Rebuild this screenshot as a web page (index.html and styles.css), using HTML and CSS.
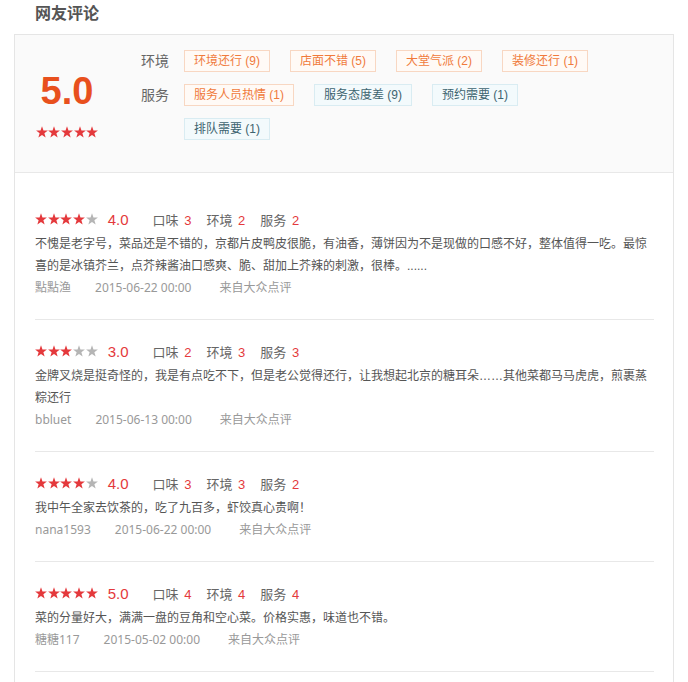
FILE: index.html
```html
<!DOCTYPE html>
<html lang="zh-CN">
<head>
  <meta charset="UTF-8" />
  <meta name="viewport" content="width=device-width, initial-scale=1.0"/>
  <title>网友评论</title>
  <link rel="stylesheet" href="styles.css">
</head>
<body>
  <svg width="0" height="0" style="position:absolute">
    <symbol id="star" viewBox="0 0 12 12">
      <polygon points="6,0.2 7.47,4.38 11.9,4.48 8.38,7.17 9.64,11.42 6,8.9 2.36,11.42 3.62,7.17 0.1,4.48 4.53,4.38"/>
    </symbol>
  </svg>

  <div class="page">
    <h2 class="section-title">网友评论</h2>

    <div class="comment-box">
      <div class="summary">
        <div class="score">
          <div class="score-num">5.0</div>
          <div class="stars">
            <svg class="star"><use href="#star"/></svg>
            <svg class="star"><use href="#star"/></svg>
            <svg class="star"><use href="#star"/></svg>
            <svg class="star"><use href="#star"/></svg>
            <svg class="star"><use href="#star"/></svg>
          </div>
        </div>
        <div class="tag-groups">
          <div class="tag-group">
            <span class="tag-label">环境</span>
            <div class="tags">
              <span class="tag good">环境还行 (9)</span>
              <span class="tag good">店面不错 (5)</span>
              <span class="tag good">大堂气派 (2)</span>
              <span class="tag good">装修还行 (1)</span>
            </div>
          </div>
          <div class="tag-group">
            <span class="tag-label">服务</span>
            <div class="tags">
              <span class="tag good">服务人员热情 (1)</span>
              <span class="tag bad">服务态度差 (9)</span>
              <span class="tag bad">预约需要 (1)</span>
              <span class="tag bad">排队需要 (1)</span>
            </div>
          </div>
        </div>
      </div>

      <ul class="review-list">
        <li class="review">
          <div class="review-head">
            <div class="stars">
              <svg class="star"><use href="#star"/></svg>
              <svg class="star"><use href="#star"/></svg>
              <svg class="star"><use href="#star"/></svg>
              <svg class="star"><use href="#star"/></svg>
              <svg class="star off"><use href="#star"/></svg>
            </div>
            <span class="review-score">4.0</span>
            <span class="sub-score">口味 <em>3</em></span>
            <span class="sub-score">环境 <em>2</em></span>
            <span class="sub-score">服务 <em>2</em></span>
          </div>
          <p class="review-text">不愧是老字号，菜品还是不错的，京都片皮鸭皮很脆，有油香，薄饼因为不是现做的口感不好，整体值得一吃。最惊喜的是冰镇芥兰，点芥辣酱油口感爽、脆、甜加上芥辣的刺激，很棒。......</p>
          <div class="review-meta">
            <span class="user">點點渔</span>
            <span class="date">2015-06-22 00:00</span>
            <span class="source">来自大众点评</span>
          </div>
        </li>

        <li class="review">
          <div class="review-head">
            <div class="stars">
              <svg class="star"><use href="#star"/></svg>
              <svg class="star"><use href="#star"/></svg>
              <svg class="star"><use href="#star"/></svg>
              <svg class="star off"><use href="#star"/></svg>
              <svg class="star off"><use href="#star"/></svg>
            </div>
            <span class="review-score">3.0</span>
            <span class="sub-score">口味 <em>2</em></span>
            <span class="sub-score">环境 <em>3</em></span>
            <span class="sub-score">服务 <em>3</em></span>
          </div>
          <p class="review-text">金牌叉烧是挺奇怪的，我是有点吃不下，但是老公觉得还行，让我想起北京的糖耳朵……其他菜都马马虎虎，煎裹蒸粽还行</p>
          <div class="review-meta">
            <span class="user">bbluet</span>
            <span class="date">2015-06-13 00:00</span>
            <span class="source">来自大众点评</span>
          </div>
        </li>

        <li class="review">
          <div class="review-head">
            <div class="stars">
              <svg class="star"><use href="#star"/></svg>
              <svg class="star"><use href="#star"/></svg>
              <svg class="star"><use href="#star"/></svg>
              <svg class="star"><use href="#star"/></svg>
              <svg class="star off"><use href="#star"/></svg>
            </div>
            <span class="review-score">4.0</span>
            <span class="sub-score">口味 <em>3</em></span>
            <span class="sub-score">环境 <em>3</em></span>
            <span class="sub-score">服务 <em>2</em></span>
          </div>
          <p class="review-text">我中午全家去饮茶的，吃了九百多，虾饺真心贵啊！</p>
          <div class="review-meta">
            <span class="user">nana1593</span>
            <span class="date">2015-06-22 00:00</span>
            <span class="source">来自大众点评</span>
          </div>
        </li>

        <li class="review">
          <div class="review-head">
            <div class="stars">
              <svg class="star"><use href="#star"/></svg>
              <svg class="star"><use href="#star"/></svg>
              <svg class="star"><use href="#star"/></svg>
              <svg class="star"><use href="#star"/></svg>
              <svg class="star"><use href="#star"/></svg>
            </div>
            <span class="review-score">5.0</span>
            <span class="sub-score">口味 <em>4</em></span>
            <span class="sub-score">环境 <em>4</em></span>
            <span class="sub-score">服务 <em>4</em></span>
          </div>
          <p class="review-text">菜的分量好大，满满一盘的豆角和空心菜。价格实惠，味道也不错。</p>
          <div class="review-meta">
            <span class="user">糖糖117</span>
            <span class="date">2015-05-02 00:00</span>
            <span class="source">来自大众点评</span>
          </div>
        </li>
      </ul>
    </div>
  </div>
</body>
</html>
```

FILE: styles.css
```css
* {
  box-sizing: border-box;
  margin: 0;
  padding: 0;
}

body {
  font-family: 'Liberation Sans', 'Noto Sans CJK SC', sans-serif;
  background: #fff;
  color: #666;
  overflow: hidden;
}

.page {
  padding: 0 14px;
}

.section-title {
  font-size: 16px;
  font-weight: bold;
  color: #555;
  line-height: 28px;
  padding-left: 21px;
  margin-bottom: 6px;
}

.comment-box {
  width: 660px;
  min-height: 700px;
  border: 1px solid #e5e5e5;
}

/* rating summary */
.summary {
  display: flex;
  background: #fafafa;
  border-bottom: 1px solid #e8e8e8;
  padding: 15px 20px 32px;
}

.score {
  width: 64px;
  margin-right: 42px;
  margin-top: 21px;
  text-align: center;
}

.score-num {
  font-size: 38px;
  line-height: 40px;
  font-weight: bold;
  color: #e8501d;
}

.score .stars {
  justify-content: center;
  margin-top: 15px;
}

.stars {
  display: flex;
  gap: 0.7px;
}

.star {
  width: 12px;
  height: 12px;
  fill: #e4393c;
}

.star.off {
  fill: #b5b5b5;
}

.tag-groups {
  display: flex;
  flex-direction: column;
  gap: 12px;
}

.tag-group {
  display: flex;
  align-items: flex-start;
}

.tag-label {
  font-size: 14px;
  line-height: 22px;
  color: #666;
  width: 28px;
  margin-right: 15px;
}

.tags {
  width: 430px;
  display: flex;
  flex-wrap: wrap;
  gap: 12px 20px;
}

.tag {
  font-size: 12px;
  line-height: 20px;
  padding: 0 9px;
  border: 1px solid;
  white-space: nowrap;
}

.tag.good {
  color: #f07a3c;
  background: #fffaf6;
  border-color: #f8d7c2;
}

.tag.bad {
  color: #3d6470;
  background: #f3fafc;
  border-color: #d9ecf2;
}

/* review list */
.review-list {
  list-style: none;
  padding: 15px 19px 0 20px;
}

.review {
  padding: 19px 0 20px;
  border-bottom: 1px solid #e8e8e8;
}

.review-head {
  display: flex;
  align-items: center;
  height: 24px;
  margin-bottom: 2px;
}

.review-score {
  font-size: 15px;
  color: #e4393c;
  margin-left: 10px;
  margin-right: 24px;
}

.sub-score {
  font-size: 13px;
  color: #666;
  margin-right: 15px;
}

.sub-score em {
  font-style: normal;
  color: #e4393c;
  margin-left: 2px;
}

.review-text {
  font-size: 12px;
  line-height: 22px;
  color: #555;
}

.review-meta {
  display: flex;
  font-family: 'Noto Sans', 'Noto Sans CJK SC', sans-serif;
  font-size: 12px;
  line-height: 22px;
  color: #999;
}

.review-meta .user {
  margin-right: 24px;
}

.review-meta .date {
  margin-right: 28px;
}
```
